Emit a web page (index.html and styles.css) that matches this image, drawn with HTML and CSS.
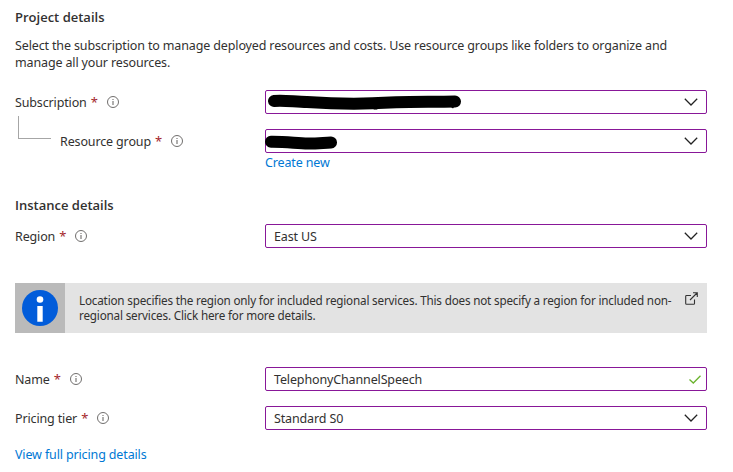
FILE: index.html
```html
<!DOCTYPE html>
<html lang="en">
<head>
<meta charset="utf-8">
<title>Create instance</title>
<link rel="stylesheet" href="styles.css">
</head>
<body>
<svg class="defs" width="0" height="0" aria-hidden="true">
  <symbol id="info" viewBox="0 0 12 12"><circle cx="6" cy="6" r="5.5" fill="none" stroke="#605e5c" stroke-width=".9"/><path d="M5.5 3h1v1h-1zM5.5 5h1v4h-1z" fill="#605e5c"/></symbol>
  <symbol id="chevron" viewBox="0 0 14 8"><path d="M.8.8 7 7 13.2.8" fill="none" stroke="#222" stroke-width="1.25"/></symbol>
</svg>
<main class="form">
  <h2 class="heading">Project details</h2>
  <p class="intro">Select the subscription to manage deployed resources and costs. Use resource groups like folders to organize and<br>manage all your resources.</p>

  <div class="row subscription">
    <div class="label">Subscription<b class="req">*</b><svg class="info"><use href="#info"/></svg></div>
    <div class="field">
      <svg class="redact" width="196" height="16" viewBox="0 0 196 16"><path d="M7 7C18 6 28 8 40 8C70 10 100 10 123 8.500C140 7.500 167 8 188 7.500" fill="none" stroke="#000" stroke-width="12" stroke-linecap="round"/><path d="M105 14h7l-2 1.500h-3zM184 13h3l-1 1.500z"/></svg>
      <svg class="chevron"><use href="#chevron"/></svg>
    </div>
  </div>

  <div class="row group">
    <div class="label nested"><i class="branch"></i>Resource group<b class="req">*</b><svg class="info"><use href="#info"/></svg></div>
    <div class="field">
      <svg class="redact short" width="72" height="16" viewBox="0 0 72 16"><path d="M6 7.700C22 7.500 32 9.500 43 9.500C53 9.500 56 9 66 8.500" fill="none" stroke="#000" stroke-width="12" stroke-linecap="round"/></svg>
      <svg class="chevron"><use href="#chevron"/></svg>
    </div>
  </div>
  <a class="link create">Create new</a>

  <h2 class="heading instance">Instance details</h2>
  <div class="row region">
    <div class="label">Region<b class="req">*</b><svg class="info"><use href="#info"/></svg></div>
    <div class="field">East US<svg class="chevron"><use href="#chevron"/></svg></div>
  </div>

  <div class="notice">
    <div class="notice-icon"><svg width="36" height="36" viewBox="0 0 36 36"><circle cx="18" cy="18" r="18" fill="#015cda"/><circle cx="18" cy="9.500" r="3.300" fill="#fff"/><path d="M15.300 16h5.400v15.700h-5.400z" fill="#fff"/></svg></div>
    <p class="notice-text">Location specifies the region only for included regional services. This does not specify a region for included non-<br>regional services. Click here for more details.</p>
    <svg class="external" width="13" height="13" viewBox="0 0 13 13" fill="none" stroke="#333" stroke-width="1.100"><path d="M6 3.500H1.500Q.7 3.500.7 4.300v7.200q0 .8.800.8h7.200q.8 0 .8-.8V7.500M5 8 12 1M8 .7h4.300V5"/></svg>
  </div>

  <div class="row name">
    <div class="label">Name<b class="req">*</b><svg class="info"><use href="#info"/></svg></div>
    <div class="field">TelephonyChannelSpeech<svg class="check" width="12" height="9" viewBox="0 0 12 9"><path d="M.5 4.500 4.300 8 11.500.8" fill="none" stroke="#6bb32e" stroke-width="1.300"/></svg></div>
  </div>
  <div class="row tier">
    <div class="label">Pricing tier<b class="req">*</b><svg class="info"><use href="#info"/></svg></div>
    <div class="field">Standard S0<svg class="chevron"><use href="#chevron"/></svg></div>
  </div>
  <a class="link pricing">View full pricing details</a>
</main>
</body>
</html>
```
FILE: styles.css
```css
* { box-sizing: border-box; }
body { margin: 0; background: #fff; color: #323130; font: 12.5px/17px "Noto Sans", "Open Sans", sans-serif; letter-spacing: -0.138px; }
.defs { position: absolute; }
.form { width: 707px; padding: 8px 0 0 15px; }
.heading { margin: 0; font-size: 13px; line-height: 18px; font-weight: 600; font-family: "Open Sans", sans-serif; letter-spacing: 0; }
.intro { margin: 11px 0 0; height: 34px; white-space: nowrap; }
.row { display: flex; align-items: center; height: 24px; }
.label { display: flex; align-items: center; width: 250px; height: 24px; }
.nested { padding-left: 3px; }
.branch { width: 33px; height: 23px; margin: -28px 9px 0 0; border: solid #a6a6a6; border-width: 0 0 1px 1px; }
.req { width: 7px; margin-left: 4px; color: #a4262c; font-weight: 400; font-size: 13px; }
.info { width: 12px; height: 12px; margin-left: 9px; }
.field { display: flex; align-items: center; width: 442px; height: 24px; padding: 0 8px; border: 1px solid #881798; border-radius: 2px; }
.chevron { width: 14px; height: 8px; margin-left: auto; }
.check { margin: 0 -3px 0 auto; }
.redact { margin: -1px 0 0 -7px; }
.short { margin: 2px 0 0 -9px; }
.subscription { margin-top: 19px; }
.group { margin-top: 15px; }
.link { display: block; color: #0078d4; }
.create { margin: 1px 0 0 250px; }
.instance { margin-top: 25px; }
.region { margin-top: 10px; }
.notice { display: flex; width: 692px; height: 50px; margin-top: 35px; background: #e3e3e3; }
.notice-icon { display: flex; align-items: center; justify-content: center; width: 50px; height: 50px; background: #bababa; }
.notice-text { width: 605px; margin: 10px 0 0 14px; font-size: 11.7px; line-height: 15px; letter-spacing: -0.185px; white-space: nowrap; }
.external { margin: 9px 0 0 1px; }
.name { margin-top: 34px; }
.tier { margin-top: 15px; }
.pricing { margin-top: 16px; }
```
